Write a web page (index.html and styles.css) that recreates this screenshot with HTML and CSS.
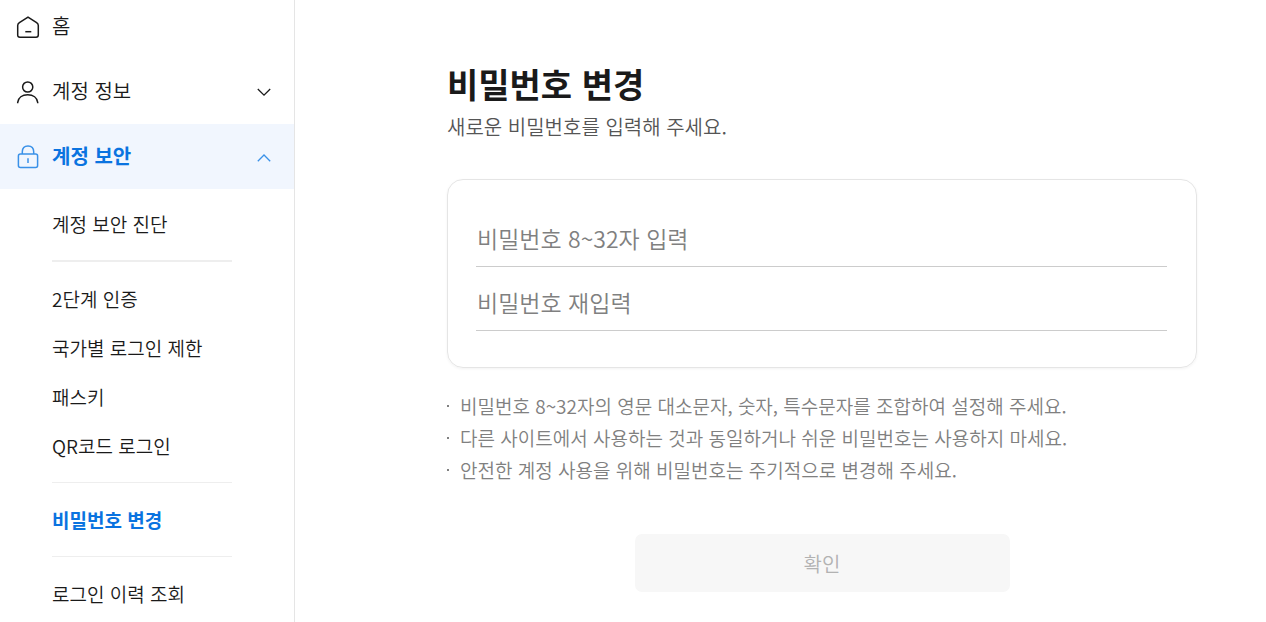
FILE: index.html
```html
<!DOCTYPE html>
<html lang="ko">
<head>
  <meta charset="UTF-8">
  <meta name="viewport" content="width=device-width, initial-scale=1.0">
  <title>비밀번호 변경</title>
  <link rel="stylesheet" href="styles.css">
</head>
<body>
  <div class="layout">

    <!-- side menu -->
    <nav class="sidebar">
      <a href="#" class="menu-row menu-home">
        <svg class="icon" viewBox="0 0 24 24">
          <path d="M12 2.2L20.6 7.6Q22.3 8.8 22.3 10.5V20Q22.3 22.2 20.1 22.2H3.9Q1.7 22.2 1.7 20V10.5Q1.7 8.8 3.4 7.6Z"/>
          <path d="M9.3 16.7H15.3"/>
        </svg>
        <span>홈</span>
      </a>
      <button type="button" class="menu-row" aria-expanded="false">
        <svg class="icon" viewBox="0 0 24 24">
          <circle cx="11.7" cy="7" r="5.1"/>
          <path d="M1.7 23.2V22.4C2.3 17.8 6.2 14.8 11.7 14.8S21.1 17.8 21.7 22.4V23.2"/>
        </svg>
        <span>계정 정보</span>
        <svg class="chevron" viewBox="0 0 16 16">
          <path d="M1.8 5L8 11.2L14.2 5"/>
        </svg>
      </button>
      <button type="button" class="menu-row active" aria-expanded="true">
        <svg class="icon" viewBox="0 0 24 24">
          <rect x="2.4" y="8.9" width="19.2" height="13.6" rx="2"/>
          <path d="M6.3 8.9V6.8C6.3 3 8.8 0.9 12 0.9S17.7 3 17.7 6.8V8.9"/>
          <path d="M12 13.2V18"/>
        </svg>
        <span>계정 보안</span>
        <svg class="chevron" viewBox="0 0 16 16">
          <path d="M1.8 12.2L8 6L14.2 12.2"/>
        </svg>
      </button>

      <div class="submenu">
        <ul class="group group-first">
          <li><a href="#">계정 보안 진단</a></li>
        </ul>
        <ul class="group">
          <li><a href="#">2단계 인증</a></li>
          <li><a href="#">국가별 로그인 제한</a></li>
          <li><a href="#">패스키</a></li>
          <li><a href="#">QR코드 로그인</a></li>
        </ul>
        <ul class="group">
          <li><a href="#" class="current">비밀번호 변경</a></li>
        </ul>
        <ul class="group">
          <li><a href="#">로그인 이력 조회</a></li>
        </ul>
      </div>
    </nav>

    <!-- password form -->
    <main class="content">
      <h1>비밀번호 변경</h1>
      <p class="desc">새로운 비밀번호를 입력해 주세요.</p>
      <form>
        <div class="card">
          <input type="password" id="password" placeholder="비밀번호 8~32자 입력" aria-label="비밀번호 8~32자 입력">
          <input type="password" id="password-check" placeholder="비밀번호 재입력" aria-label="비밀번호 재입력">
        </div>
        <ul class="notes">
          <li>비밀번호 8~32자의 영문 대소문자, 숫자, 특수문자를 조합하여 설정해 주세요.</li>
          <li>다른 사이트에서 사용하는 것과 동일하거나 쉬운 비밀번호는 사용하지 마세요.</li>
          <li>안전한 계정 사용을 위해 비밀번호는 주기적으로 변경해 주세요.</li>
        </ul>
        <button type="submit" class="submit-btn" disabled>확인</button>
      </form>
    </main>

  </div>
</body>
</html>
```
FILE: styles.css
```css
:root{
  --blue: #0a73e0;
  --black: #1a1a1a;
  --grey: #808080;
  --line: #e5e5e5;
}
* {
  box-sizing: border-box;
}
body{
  margin: 0;
  background-color: #fff;
  color: var(--black);
  font-family: "Noto Sans CJK KR", sans-serif;
  font-weight: 350;
}
ul{
  list-style: none;
  margin: 0;
  padding: 0;
}
a{
  color: inherit;
  text-decoration: none;
}
button, input{
  font: inherit;
}
.layout{
  display: flex;
  min-height: 100vh;
}

/* side menu */
.sidebar{
  flex: 0 0 295px;
  border-right: 1px solid var(--line);
}
.menu-row{
  display: flex;
  align-items: center;
  gap: 12px;
  width: 100%;
  height: 65px;
  padding: 0 22px 0 16px;
  border: none;
  background: none;
  color: var(--black);
  font-size: 20px;
  line-height: 30px;
  text-align: left;
  cursor: pointer;
}
.menu-row span{
  padding-bottom: 2px;
}
.menu-home{
  height: 54px;
  margin-bottom: 5px;
}
.menu-row.active{
  background-color: #f1f6fe;
  color: var(--blue);
  font-weight: 700;
}
.icon{
  width: 24px;
  height: 24px;
  fill: none;
  stroke: currentColor;
  stroke-width: 1.5;
}
.chevron{
  width: 16px;
  height: 16px;
  margin-left: auto;
  fill: none;
  stroke: currentColor;
  stroke-width: 1.3;
}
.active .icon, .active .chevron{
  stroke: #3a91e8;
}
.submenu{
  width: 180px;
  margin-left: 52px;
  padding-top: 10px;
}
.group a{
  display: block;
  font-size: 19px;
  line-height: 49px;
  white-space: nowrap;
}
.group a.current{
  color: var(--blue);
  font-weight: 700;
}
.group + .group{
  margin-top: 12px;
  padding-top: 12px;
  border-top: 1px solid #eee;
}
.group-first + .group{
  border-top-width: 2px;
}

/* password form */
.content{
  flex: 1;
  max-width: 971px;
  padding: 60px 69px 30px 152px;
}
h1{
  margin: 0;
  font-size: 34px;
  line-height: 48px;
  font-weight: 700;
}
.desc{
  margin: 3px 0 37px;
  color: #555;
  font-size: 20px;
  line-height: 31px;
}
.card{
  padding: 23px 29px 36px 28px;
  border: 1px solid var(--line);
  border-radius: 16px;
  box-shadow: 0 1px 3px rgba(0, 0, 0, 0.05);
}
.card input{
  display: block;
  width: 100%;
  height: 64px;
  padding: 7px 0 0 1px;
  border: none;
  border-bottom: 1px solid #ccc;
  border-radius: 0;
  outline: none;
  background: none;
  font-size: 23px;
}
.card input:focus{
  border-color: var(--blue);
}
.card input::placeholder{
  color: var(--grey);
  opacity: 1;
}
.notes{
  margin: 22px 0 48px;
  color: var(--grey);
  font-size: 19px;
  line-height: 32px;
}
.notes li{
  display: flex;
  align-items: center;
  gap: 11px;
}
.notes li::before{
  content: "";
  flex: none;
  width: 2px;
  height: 2px;
  background-color: var(--grey);
}
.submit-btn{
  display: block;
  width: 50%;
  height: 58px;
  margin: 0 auto;
  border: none;
  border-radius: 7px;
  background-color: #f7f7f7;
  color: #b2b2b2;
  font-size: 20px;
}
```
